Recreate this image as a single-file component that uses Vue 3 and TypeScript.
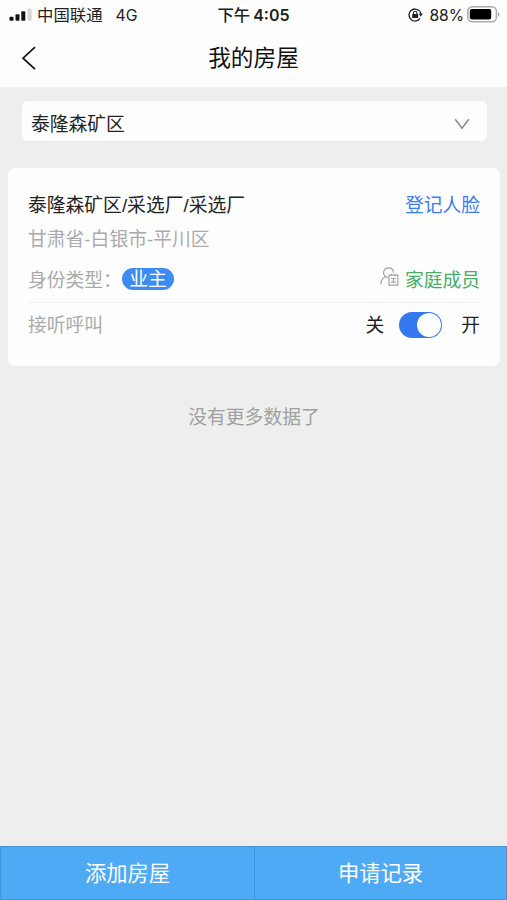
<script setup lang="ts">
import { ref } from 'vue'

interface House {
  name: string
  region: string
  identity: string
}

const community = ref('泰隆森矿区')
const house = ref<House>({
  name: '泰隆森矿区/采选厂/采选厂',
  region: '甘肃省-白银市-平川区',
  identity: '业主',
})
const answerCalls = ref(true)
</script>

<template>
  <div class="page">
    <header class="top">
      <div class="status">
        <div class="status-left">
          <svg class="signal" width="23" height="14" viewBox="0 0 23 14">
            <rect x="0.5" y="8.8" width="4" height="4" rx="1" fill="#111" />
            <rect x="6.5" y="6.3" width="4" height="6.5" rx="1" fill="#111" />
            <rect x="12.3" y="3.3" width="4" height="9.5" rx="1" fill="#111" />
            <rect x="18.6" y="0.4" width="4" height="12.4" rx="1" fill="#d4d4d4" />
          </svg>
          <span class="carrier">中国联通</span>
          <span class="network">4G</span>
        </div>
        <div class="time">下午<span class="clock">4:05</span></div>
        <div class="status-right">
          <svg class="lock" width="15" height="14" viewBox="0 0 15 14">
            <path d="M11.6 3.2A6 6 0 1 0 12 10.3" fill="none" stroke="#222" stroke-width="1.3" />
            <path d="M10.8 5.6h4l-2 3.200z" fill="#222" />
            <path d="M11.6 3.2q1.200 1.200 1.300 3" fill="none" stroke="#222" stroke-width="1.2" />
            <rect x="4.2" y="5.900" width="6" height="4.200" rx=".6" fill="#222" />
            <path d="M5.500 6.500V5a1.700 1.700 0 0 1 3.400 0v1.500" fill="none" stroke="#222" stroke-width="1.100" />
          </svg>
          <span class="percent">88%</span>
          <svg class="battery" width="33" height="17" viewBox="0 0 33 17">
            <rect x=".8" y=".8" width="28.6" height="15" rx="4.5" fill="#fff" stroke="#aaa" stroke-width="1.5" />
            <rect x="2.8" y="3" width="21.4" height="10.6" rx="2" fill="#000" />
            <path d="M31 6v4.8q1.4-.7 1.4-2.4T31 6z" fill="#aaa" />
          </svg>
        </div>
      </div>
      <div class="nav">
        <svg class="back" width="16" height="24" viewBox="0 0 16 24">
          <path d="M14 1.2 2 12.2l12 11" fill="none" stroke="#111" stroke-width="1.7" />
        </svg>
        <h1 class="title">我的房屋</h1>
      </div>
    </header>

    <main class="content">
      <div class="picker">
        <span>{{ community }}</span>
        <svg class="chevron" width="16" height="12" viewBox="0 0 16 12">
          <path d="M1.2 1.2 8 10.2l6.8-9" fill="none" stroke="#8c8c8c" stroke-width="1.6" />
        </svg>
      </div>

      <section class="card">
        <div class="row name-row">
          <span>{{ house.name }}</span>
          <a class="face">登记人脸</a>
        </div>
        <div class="row region-row">{{ house.region }}</div>
        <div class="row identity-row">
          <div class="identity">
            <span class="label">身份类型：</span>
            <span class="badge">{{ house.identity }}</span>
          </div>
          <a class="family">
            <svg class="member" width="19" height="20" viewBox="0 0 19 20">
              <g fill="none" stroke="#a4a4a4" stroke-width="1.2">
                <path d="M.8 17.5c.2-4 1.900-6.500 4.900-7.700C3.700 8.300 3.300 6.300 3.800 4.400 4.500 2 6.300.9 8.500.9c2.900 0 4.800 2 4.900 4.900" />
                <path d="M5.700 9.800 8 10.700" />
                <path d="M9 8.200h8.800v10H9z" />
                <path d="M11.700 6.700v2.600M15.100 6.700v2.600M10.900 11.500h5M10.900 15.200h5M13.400 11.500v3.700" />
              </g>
            </svg>
            <span class="label">家庭成员</span>
          </a>
        </div>
        <div class="row call-row">
          <span class="label muted">接听呼叫</span>
          <div class="toggle">
            <span class="label">关</span>
            <button class="switch" :class="{ on: answerCalls }" @click="answerCalls = !answerCalls">
              <span class="knob"></span>
            </button>
            <span class="label">开</span>
          </div>
        </div>
      </section>

      <p class="empty">没有更多数据了</p>
    </main>

    <footer class="actions">
      <button class="action">添加房屋</button>
      <button class="action">申请记录</button>
    </footer>
  </div>
</template>

<style>
body {
  margin: 0;
  background: #eee;
}
</style>

<style scoped>
.page {
  display: flex;
  flex-direction: column;
  height: 900px;
  background: #eee;
  color: #222;
  font-family: 'Liberation Sans', 'Noto Sans CJK SC', sans-serif;
  font-size: 18.8px;
  line-height: 28px;
}
svg {
  display: block;
  flex: none;
}
.top {
  height: 87px;
  background: #fefefe;
}
.status {
  display: grid;
  grid-template-columns: 1fr auto 1fr;
  align-items: center;
  height: 30px;
  padding: 0 7px 0 9px;
  font-family: Inter, 'Noto Sans CJK SC', sans-serif;
  font-size: 16.4px;
}
.status-left,
.status-right {
  display: flex;
  align-items: center;
}
.status-right {
  justify-content: flex-end;
}
.carrier {
  margin-left: 5px;
}
.network {
  margin-left: 13px;
  padding-top: 1px;
  font-size: 15.8px;
}
.time {
  margin-right: 2px;
  font-weight: 500;
}
.clock {
  margin-left: 3px;
  font-size: 16px;
  font-weight: 600;
}
.percent {
  margin: 0 3px 0 6px;
  padding-top: 1px;
  font-size: 15.6px;
}
.battery {
  margin-top: -2px;
}
.nav {
  display: grid;
  grid-template-columns: 40px 1fr 40px;
  align-items: center;
  height: 56px;
}
.back {
  margin-left: 21px;
}
.title {
  margin: 0;
  font-size: 22.7px;
  font-weight: 400;
  text-align: center;
  color: #111;
}
.content {
  flex: 1;
  padding: 14px 7px 0 8px;
}
.picker {
  display: flex;
  align-items: center;
  justify-content: space-between;
  box-sizing: border-box;
  height: 40px;
  margin: 0 13px 0 14px;
  padding: 7px 17px 0 9px;
  border-radius: 6px;
  background: #fefefe;
}
.chevron {
  margin-top: -2px;
}
.card {
  box-sizing: border-box;
  height: 198px;
  margin-top: 27px;
  padding: 21px 20px 0;
  border-radius: 7px;
  background: #fefefe;
}
.row {
  display: flex;
  align-items: center;
  justify-content: space-between;
}
.name-row {
  height: 34px;
}
.face {
  color: #3b7df0;
}
.region-row {
  height: 34px;
  color: #aaa;
}
.identity-row {
  height: 45px;
  border-bottom: 1px solid #f0f0f0;
  color: #aaa;
}
.label {
  padding-top: 2px;
}
.identity {
  display: flex;
  align-items: center;
}
.badge {
  width: 52px;
  height: 22px;
  margin-top: -1px;
  border-radius: 11px;
  background: #3e8cf3;
  color: #fff;
  line-height: 24px;
  text-align: center;
}
.family {
  display: flex;
  align-items: center;
  gap: 6px;
  color: #47ad69;
}
.member {
  margin-top: -5px;
}
.call-row {
  height: 44px;
}
.muted {
  color: #aaa;
}
.toggle {
  display: flex;
  align-items: center;
}
.switch {
  display: flex;
  box-sizing: border-box;
  width: 43px;
  height: 26px;
  margin: 0 19px 0 15px;
  padding: 1px;
  border: 0;
  border-radius: 13px;
  background: #ccc;
}
.switch.on {
  justify-content: flex-end;
  background: #3478ed;
}
.knob {
  width: 24px;
  height: 24px;
  border-radius: 50%;
  background: #fff;
}
.empty {
  margin: 38px 0 0;
  text-align: center;
  color: #a0a0a0;
}
.actions {
  display: grid;
  grid-template-columns: 254px 253px;
  box-sizing: border-box;
  height: 54px;
  border-top: 1px solid #4795d6;
  border-bottom: 1px solid #4795d6;
}
.action {
  padding: 2px 0 0;
  border: 0;
  border-left: 1px solid #4293d8;
  background: #4faaf6;
  color: #fff;
  font: inherit;
  font-size: 21.3px;
}
.action:last-child {
  border-right: 1px solid #4293d8;
}
</style>
